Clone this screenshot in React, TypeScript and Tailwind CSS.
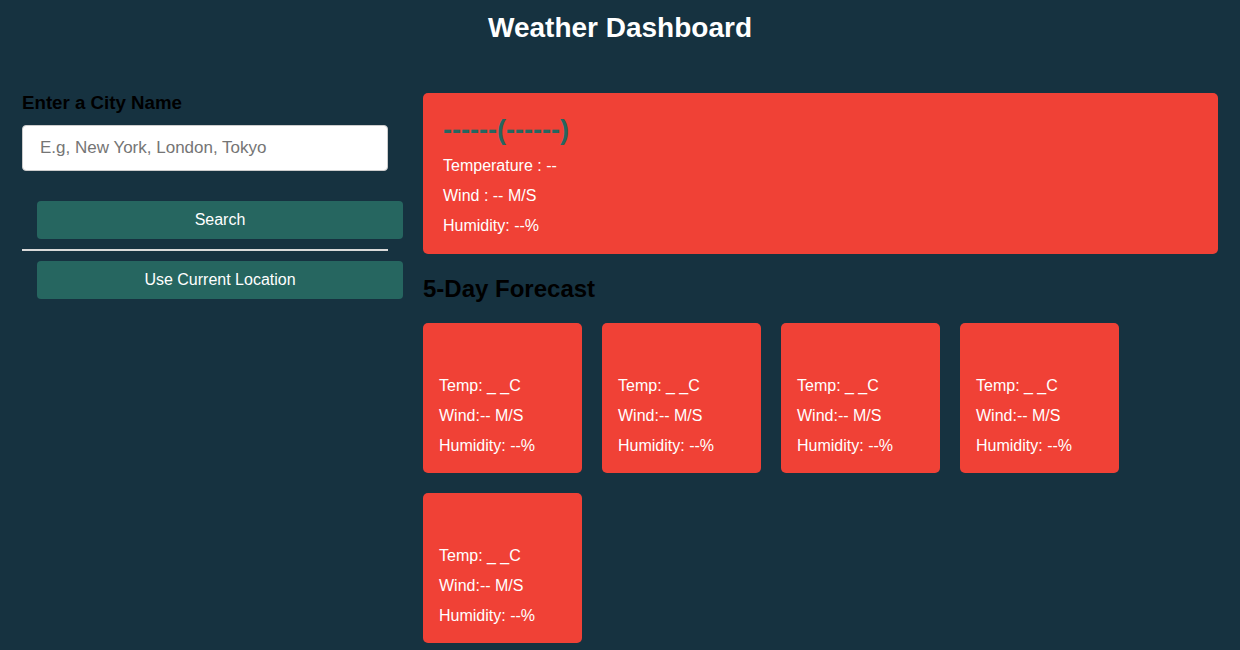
const forecastDays = [1, 2, 3, 4, 5];

function ForecastCard() {
  return (
    <div className="h-[150px] w-[159px] rounded-[5px] bg-[#f04136] px-4 pt-[48px] text-base leading-[30px] text-white">
      <p>Temp: _ _C</p>
      <p>Wind:-- M/S</p>
      <p>Humidity: --%</p>
    </div>
  );
}

export default function App() {
  return (
    <div className="min-h-[650px] bg-[#163240] font-['Liberation_Sans',Arial,sans-serif]">
      <header className="flex h-[56px] items-center justify-center">
        <h1 className="text-[28px] leading-8 font-bold text-white">Weather Dashboard</h1>
      </header>
      <main className="flex gap-5 px-[22px] pt-[36px]">
        <div className="w-[381px] shrink-0">
          <h3 className="text-[18.7px] leading-[22px] font-bold text-black">Enter a City Name</h3>
          <input
            type="text"
            placeholder="E.g, New York, London, Tokyo"
            className="mt-[11px] h-[46px] w-[366px] rounded-[4px] border border-[#ccc] bg-white px-[17px] text-[17px] text-black outline-none placeholder:text-[#757575]"
          />
          <button
            type="button"
            className="mt-[30px] ml-[15px] h-[38px] w-[366px] rounded-[4px] bg-[#266660] text-base text-white"
          >
            Search
          </button>
          <div className="mt-[10px] h-[2px] w-[366px] bg-[#d9d9d9]" />
          <button
            type="button"
            className="mt-[10px] ml-[15px] h-[38px] w-[366px] rounded-[4px] bg-[#266660] text-base text-white"
          >
            Use Current Location
          </button>
        </div>
        <div className="flex-1 pt-px">
          <div className="h-[161px] rounded-[5px] bg-[#f04136] px-5 pt-[22px]">
            <h2 className="text-[27px] leading-[30px] font-bold text-[#266660]">------(------)</h2>
            <div className="mt-[6px] text-base leading-[30px] text-white">
              <p>Temperature : --</p>
              <p>Wind : -- M/S</p>
              <p>Humidity: --%</p>
            </div>
          </div>
          <h2 className="mt-[21px] text-2xl leading-[28px] font-bold text-black">5-Day Forecast</h2>
          <div className="mt-5 flex flex-wrap gap-x-5 gap-y-5">
            {forecastDays.map((day) => (
              <ForecastCard key={day} />
            ))}
          </div>
        </div>
      </main>
    </div>
  );
}
